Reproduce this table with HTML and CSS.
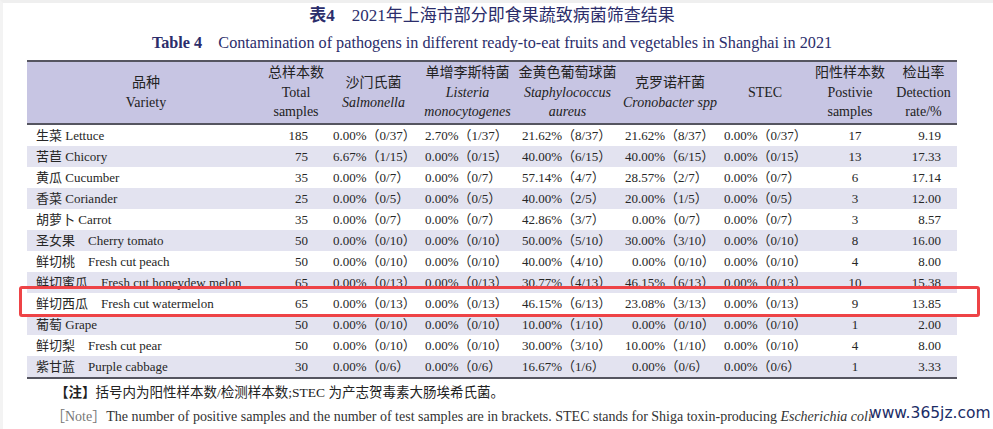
FILE: index.html
```html
<!DOCTYPE html>
<html lang="zh">
<head>
<meta charset="utf-8">
<title>表4 2021年上海市部分即食果蔬致病菌筛查结果</title>
<link rel="stylesheet" href="styles.css">
</head>
<body>
<div class="page">
  <div class="sheet">
    <h1 class="title-zh"><b>表4</b>&emsp;2021年上海市部分即食果蔬致病菌筛查结果</h1>
    <h2 class="title-en"><b>Table 4</b>&emsp;Contamination of pathogens in different ready-to-eat fruits and vegetables in Shanghai in 2021</h2>
    <table class="data">
      <colgroup>
        <col class="c-var"><col class="c-tot"><col class="c-sal"><col class="c-lis"><col class="c-sta"><col class="c-cro"><col class="c-stec"><col class="c-pos"><col class="c-rate">
      </colgroup>
      <thead>
        <tr>
          <th>品种<br>Variety</th>
          <th>总样本数<br>Total<br>samples</th>
          <th>沙门氏菌<br><i>Salmonella</i></th>
          <th>单增李斯特菌<br><i>Listeria</i><br><i>monocytogenes</i></th>
          <th>金黄色葡萄球菌<br><i>Staphylococcus</i><br><i>aureus</i></th>
          <th>克罗诺杆菌<br><i>Cronobacter spp</i></th>
          <th>STEC</th>
          <th>阳性样本数<br>Postivie<br>samples</th>
          <th>检出率<br>Detection<br>rate/%</th>
        </tr>
      </thead>
      <tbody>
        <tr><td>生菜 Lettuce</td><td>185</td><td>0.00%（0/37）</td><td>2.70%（1/37）</td><td>21.62%（8/37）</td><td>21.62%（8/37）</td><td>0.00%（0/37）</td><td>17</td><td>9.19</td></tr>
        <tr><td>苦苣 Chicory</td><td>75</td><td>6.67%（1/15）</td><td>0.00%（0/15）</td><td>40.00%（6/15）</td><td>40.00%（6/15）</td><td>0.00%（0/15）</td><td>13</td><td>17.33</td></tr>
        <tr><td>黄瓜 Cucumber</td><td>35</td><td>0.00%（0/7）</td><td>0.00%（0/7）</td><td>57.14%（4/7）</td><td>28.57%（2/7）</td><td>0.00%（0/7）</td><td>6</td><td>17.14</td></tr>
        <tr><td>香菜 Coriander</td><td>25</td><td>0.00%（0/5）</td><td>0.00%（0/5）</td><td>40.00%（2/5）</td><td>20.00%（1/5）</td><td>0.00%（0/5）</td><td>3</td><td>12.00</td></tr>
        <tr><td>胡萝卜 Carrot</td><td>35</td><td>0.00%（0/7）</td><td>0.00%（0/7）</td><td>42.86%（3/7）</td><td class="ind">0.00%（0/7）</td><td>0.00%（0/7）</td><td>3</td><td>8.57</td></tr>
        <tr><td>圣女果&emsp;Cherry tomato</td><td>50</td><td>0.00%（0/10）</td><td>0.00%（0/10）</td><td>50.00%（5/10）</td><td>30.00%（3/10）</td><td>0.00%（0/10）</td><td>8</td><td>16.00</td></tr>
        <tr><td>鲜切桃&emsp;Fresh cut peach</td><td>50</td><td>0.00%（0/10）</td><td>0.00%（0/10）</td><td>40.00%（4/10）</td><td class="ind">0.00%（0/10）</td><td>0.00%（0/10）</td><td>4</td><td>8.00</td></tr>
        <tr><td>鲜切蜜瓜&emsp;Fresh cut honeydew melon</td><td>65</td><td>0.00%（0/13）</td><td>0.00%（0/13）</td><td>30.77%（4/13）</td><td>46.15%（6/13）</td><td>0.00%（0/13）</td><td>10</td><td>15.38</td></tr>
        <tr><td>鲜切西瓜&emsp;Fresh cut watermelon</td><td>65</td><td>0.00%（0/13）</td><td>0.00%（0/13）</td><td>46.15%（6/13）</td><td>23.08%（3/13）</td><td>0.00%（0/13）</td><td>9</td><td>13.85</td></tr>
        <tr><td>葡萄 Grape</td><td>50</td><td>0.00%（0/10）</td><td>0.00%（0/10）</td><td>10.00%（1/10）</td><td class="ind">0.00%（0/10）</td><td>0.00%（0/10）</td><td>1</td><td>2.00</td></tr>
        <tr><td>鲜切梨&emsp;Fresh cut pear</td><td>50</td><td>0.00%（0/10）</td><td>0.00%（0/10）</td><td>30.00%（3/10）</td><td>10.00%（1/10）</td><td>0.00%（0/10）</td><td>4</td><td>8.00</td></tr>
        <tr><td>紫甘蓝&emsp;Purple cabbage</td><td>30</td><td>0.00%（0/6）</td><td>0.00%（0/6）</td><td>16.67%（1/6）</td><td class="ind">0.00%（0/6）</td><td>0.00%（0/6）</td><td>1</td><td>3.33</td></tr>
      </tbody>
    </table>
    <div class="notes">
      <p class="note-zh"><b>【注】</b>括号内为阳性样本数/检测样本数;STEC 为产志贺毒素大肠埃希氏菌。</p>
      <p class="note-en"><span class="tag">［Note］</span>The number of positive samples and the number of test samples are in brackets. STEC stands for Shiga toxin-producing <i>Escherichia coli</i></p>
    </div>
  </div>
  <div class="highlight"></div>
  <div class="watermark">www.365jz.com</div>
</div>
</body>
</html>
```

FILE: styles.css
```css
html, body {
  margin: 0;
  padding: 0;
  background: #ffffff;
}
.page {
  position: relative;
  width: 993px;
  height: 429px;
  overflow: hidden;
  box-sizing: border-box;
  border-top: 3px solid #efefef;
  border-left: 3px solid #f3f3f3;
  font-family: "Liberation Serif", "Noto Sans CJK SC", serif;
  color: #262626;
}
.sheet {
  width: 930px;
  margin-left: 24px;
}
.title-zh {
  margin: 0;
  font-size: 17px;
  line-height: 26px;
  font-weight: normal;
  text-align: center;
  color: #2b2d6b;
}
.title-en {
  margin: 1px 0 4px;
  font-size: 16.2px;
  line-height: 26px;
  font-weight: normal;
  text-align: center;
  color: #2b2d6b;
}
.data {
  width: 930px;
  table-layout: fixed;
  border-collapse: collapse;
  font-size: 13px;
}
.c-var { width: 238px; }
.c-tot { width: 62px; }
.c-sal { width: 93px; }
.c-lis { width: 95px; }
.c-sta { width: 105px; }
.c-cro { width: 100px; }
.c-stec { width: 90px; }
.c-pos { width: 80px; }
.c-rate { width: 67px; }
.data thead tr {
  background: #c7c5e3;
  border-top: 2px solid #555560;
  border-bottom: 2px solid #555560;
}
.data th {
  height: 61px;
  padding: 0;
  font-size: 14px;
  line-height: 19.5px;
  font-weight: normal;
  color: #222;
  text-align: center;
  vertical-align: middle;
  white-space: nowrap;
}
.data tbody tr:last-child {
  border-bottom: 2px solid #555560;
}
.data tbody tr:nth-child(even) {
  background: #e3e3f0;
}
.data td {
  height: 21px;
  padding: 0 0 0 5px;
  line-height: 21px;
  white-space: nowrap;
  color: #262626;
}
.data td:nth-child(1) { padding-left: 9px; }
.data td:nth-child(2) { text-align: right; padding: 0 19px 0 0; }
.data td:nth-child(3) { padding-left: 6px; }
.data td:nth-child(5) { padding-left: 7px; }
.data td:nth-child(7) { padding-left: 4px; }
.data td.ind { padding-left: 12px; }
.data td:nth-child(8) { text-align: center; padding: 0 0 0 10px; }
.data td:nth-child(9) { text-align: right; padding: 0 16px 0 0; }
.notes {
  padding-left: 28px;
  margin-top: 3px;
}
.note-zh {
  margin: 0;
  font-size: 13.5px;
  line-height: 22px;
  color: #222;
}
.note-en {
  margin: 0;
  font-size: 14px;
  line-height: 25px;
  color: #333;
  white-space: nowrap;
}
.note-en .tag {
  color: #777;
  margin-left: -4px;
}
.highlight {
  position: absolute;
  left: 16px;
  top: 283px;
  width: 955px;
  height: 25px;
  border: 3px solid #ee4346;
  border-radius: 3px;
}
.watermark {
  position: absolute;
  left: 866px;
  top: 399px;
  font-family: "DejaVu Sans", "Liberation Sans", sans-serif;
  font-size: 15.5px;
  line-height: 22px;
  color: #1b2c66;
  text-shadow: 0 0 2px #ffffff, 0 0 2px #ffffff, 0 0 1px #ffffff;
}
```
